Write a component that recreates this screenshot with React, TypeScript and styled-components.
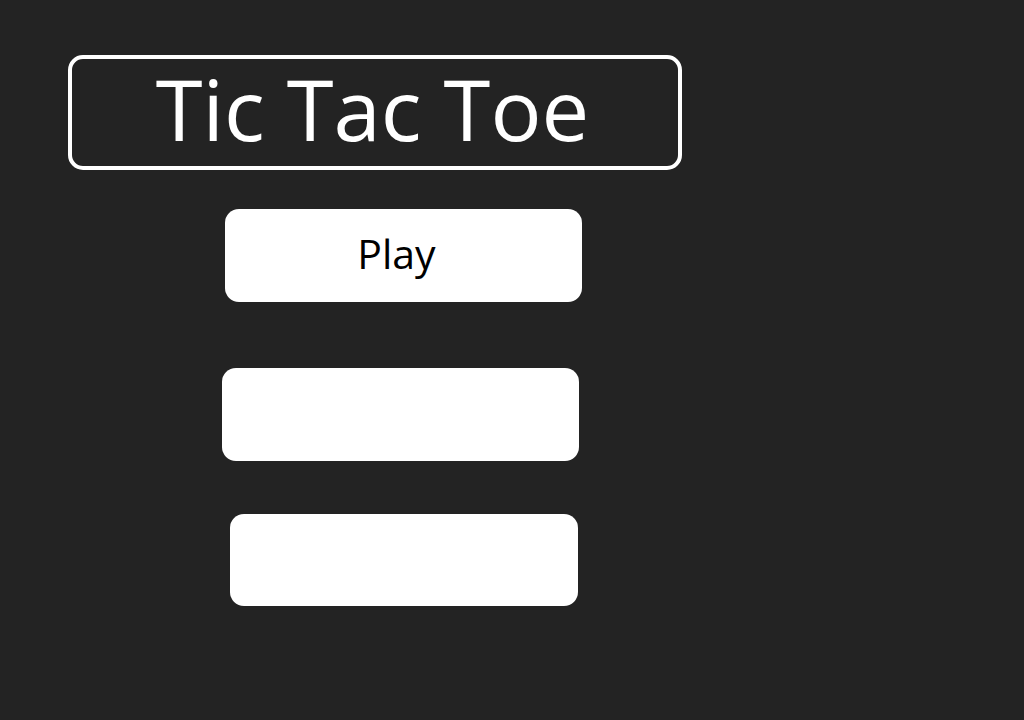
import * as React from 'react';
import styled, { createGlobalStyle } from 'styled-components';

const GlobalStyle = createGlobalStyle`
  html, body {
    margin: 0;
    padding: 0;
    background: #232323;
  }
  body {
    font-family: 'Open Sans', 'Noto Sans', sans-serif;
  }
`;

const Page = styled.main`
  width: 1024px;
  height: 720px;
  box-sizing: border-box;
  padding: 55px 0 0 68px;
  display: flex;
  flex-direction: column;
  align-items: flex-start;
`;

const TitleBox = styled.header`
  width: 614px;
  height: 115px;
  box-sizing: border-box;
  border: 4px solid #ffffff;
  border-radius: 15px;
  display: flex;
  align-items: center;
  justify-content: center;
  padding-right: 5px;
`;

const Title = styled.h1`
  margin: 0;
  color: #ffffff;
  font-family: 'Open Sans', 'Noto Sans', sans-serif;
  font-weight: 400;
  font-size: 85px;
  line-height: 1;
  letter-spacing: 0;
  transform: translateY(-4px);
`;

const Menu = styled.nav`
  display: flex;
  flex-direction: column;
  align-items: flex-start;
`;

const MenuButton = styled.button<{ $top: number; $left: number; $width: number; $height: number }>`
  margin-top: ${(p) => p.$top}px;
  margin-left: ${(p) => p.$left}px;
  width: ${(p) => p.$width}px;
  height: ${(p) => p.$height}px;
  border: none;
  border-radius: 14px;
  background: #ffffff;
  color: #000000;
  font-family: 'Open Sans', 'Noto Sans', sans-serif;
  font-size: 41px;
  line-height: 1;
  padding: 0 14px 4px 0;
  display: flex;
  align-items: center;
  justify-content: center;
  cursor: pointer;
`;

const App = () => (
  <>
    <GlobalStyle />
    <Page>
      <TitleBox>
        <Title>Tic Tac Toe</Title>
      </TitleBox>
      <Menu>
        <MenuButton $top={39} $left={157} $width={357} $height={93}>
          Play
        </MenuButton>
        <MenuButton $top={66} $left={154} $width={357} $height={93} aria-label="option" />
        <MenuButton $top={53} $left={162} $width={348} $height={92} aria-label="option" />
      </Menu>
    </Page>
  </>
);

export default App;
